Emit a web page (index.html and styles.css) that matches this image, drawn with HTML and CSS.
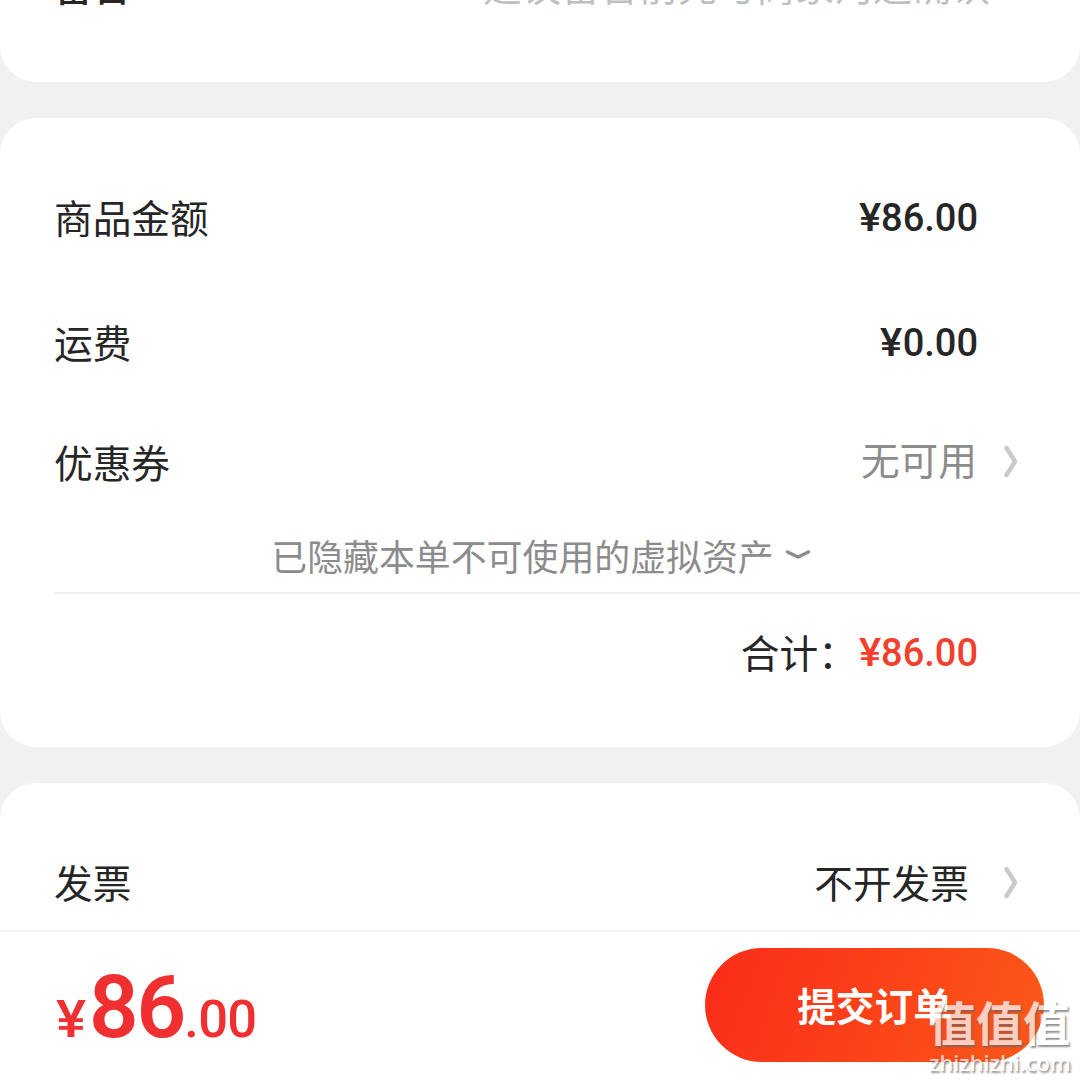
FILE: index.html
```html
<!DOCTYPE html>
<html lang="zh-CN">
<head>
<meta charset="utf-8">
<title>确认订单</title>
<link rel="stylesheet" href="styles.css">
</head>
<body>
<div class="page">
  <main class="content">
    <section class="card card-note">
      <div class="row row-note">
        <span class="label label-strong">留言</span>
        <span class="placeholder">建议留言前先与商家沟通确认</span>
      </div>
    </section>
    <section class="card card-amount">
      <div class="row">
        <span class="label">商品金额</span>
        <span class="price"><span class="sign">¥</span>86.00</span>
      </div>
      <div class="row">
        <span class="label">运费</span>
        <span class="price"><span class="sign">¥</span>0.00</span>
      </div>
      <div class="row row-coupon">
        <span class="label">优惠券</span>
        <span class="value muted">无可用</span>
        <svg class="arrow" viewBox="0 0 16 34"><path d="M3.5 4 L12 17.5 L3.5 31"/></svg>
      </div>
      <div class="hidden-assets">
        <span>已隐藏本单不可使用的虚拟资产</span>
        <svg class="down" viewBox="0 0 26 14"><path d="M2.5 4 L13 9 L23.5 4"/></svg>
      </div>
      <div class="total">
        <span class="total-label">合计：</span>
        <span class="price price-red"><span class="sign">¥</span>86.00</span>
      </div>
    </section>
    <section class="card card-invoice">
      <div class="row row-invoice">
        <span class="label">发票</span>
        <span class="value">不开发票</span>
        <svg class="arrow" viewBox="0 0 16 34"><path d="M3.5 4 L12 17.5 L3.5 31"/></svg>
      </div>
    </section>
  </main>
  <footer class="bar">
    <div class="sum"><span class="sum-sign">¥</span><span class="sum-int">86</span><span class="sum-dec">.00</span></div>
    <button class="submit" type="button">提交订单</button>
  </footer>
  <div class="watermark">
    <div class="mark-name">值值值</div>
    <div class="mark-url">zhizhizhi.com</div>
  </div>
</div>
</body>
</html>
```
FILE: styles.css
```css
* { box-sizing: border-box; }

body {
  margin: 0;
  background: #f1f1f1;
  color: #262626;
  font-family: "Noto Sans CJK SC", sans-serif;
  font-size: 38.7px;
  line-height: 56px;
}

.page {
  position: relative;
  display: flex;
  flex-direction: column;
  width: 1080px;
  height: 1080px;
  overflow: hidden;
}

.content {
  display: flex;
  flex-direction: column;
  gap: 36px;
  height: 930px;
}

.card {
  flex-shrink: 0;
  background: #fff;
  border-radius: 36px;
}

.card-note {
  height: 82px;
  border-radius: 0 0 36px 36px;
}

.card-amount {
  height: 629px;
  padding-top: 36px;
}

.card-invoice {
  height: 147px;
  padding-top: 50px;
  border-radius: 36px 36px 0 0;
}

.row {
  display: flex;
  align-items: center;
  height: 125px;
  padding: 0 102px 0 54px;
}

.row-note {
  height: 56px;
  margin-top: -44px;
  padding-right: 90px;
}

.row-coupon {
  height: 112px;
  padding-right: 61px;
}

.row-invoice {
  height: 97px;
  padding-right: 61px;
}

.label {
  margin-right: auto;
  padding-bottom: 1px;
}

.row-coupon .label { padding: 1px 0 0; }

.label-strong { font-weight: 500; }

.placeholder {
  color: #bfbfbf;
  font-size: 39px;
}

.price {
  padding-top: 2px;
  font-family: Roboto, sans-serif;
  font-size: 38px;
  font-weight: 500;
}

.sign {
  display: inline-block;
  margin-right: 1px;
  transform: scaleX(1.1);
}

.price-red { color: #f2402d; }

.value {
  margin-right: 34px;
  padding-bottom: 1px;
}

.muted {
  margin-right: 26px;
  padding-bottom: 4px;
  color: #8c8c8c;
}

.arrow {
  width: 16px;
  height: 34px;
  fill: none;
  stroke: #c9c9c9;
  stroke-width: 4.4;
  stroke-linecap: round;
  stroke-linejoin: round;
}

.row-coupon .arrow { margin-top: 1px; }

.hidden-assets {
  display: flex;
  align-items: center;
  justify-content: center;
  gap: 11px;
  height: 76px;
  padding: 2px 0 0 2px;
  color: #8c8c8c;
  font-size: 35.9px;
}

.down {
  width: 26px;
  height: 14px;
  fill: none;
  stroke: #8c8c8c;
  stroke-width: 3.4;
  stroke-linecap: round;
  stroke-linejoin: round;
}

.total {
  display: flex;
  align-items: center;
  justify-content: flex-end;
  height: 117px;
  margin-left: 54px;
  padding-right: 102px;
  border-top: 2px solid #f0f0f0;
}

.total-label {
  margin-right: 3px;
  padding-bottom: 1px;
}

.bar {
  display: flex;
  justify-content: space-between;
  height: 150px;
  padding: 16px 36px 0 57px;
  background: #fff;
  border-top: 2px solid #f4f4f4;
}

.sum {
  display: flex;
  align-items: baseline;
  height: 120px;
  color: #f03030;
  font-family: Roboto, sans-serif;
  font-size: 52.5px;
  font-weight: 500;
  line-height: 119px;
}

.sum-sign {
  margin-right: 4px;
  transform: scaleX(1.08);
}

.sum-int {
  font-size: 87px;
  font-weight: 600;
  letter-spacing: -2px;
}

.sum-dec { letter-spacing: -0.7px; }

.submit {
  width: 339px;
  height: 114px;
  padding: 0 0 2px;
  border: 0;
  border-radius: 57px;
  background: linear-gradient(110deg, #fa2c19 0%, #fb3d19 40%, #fc5a18 100%);
  color: #fff;
  font: 700 38.7px/56px "Noto Sans CJK SC", sans-serif;
}

.watermark {
  position: absolute;
  left: 929px;
  top: 994px;
  color: #fff;
  text-shadow: 1.5px 1.5px 2px #666;
  opacity: 0.72;
}

.mark-name {
  font-size: 47px;
  font-weight: 700;
  line-height: 54px;
}

.mark-url {
  font-family: "Noto Sans", sans-serif;
  font-size: 22px;
  font-weight: 500;
  line-height: 28px;
}
```
